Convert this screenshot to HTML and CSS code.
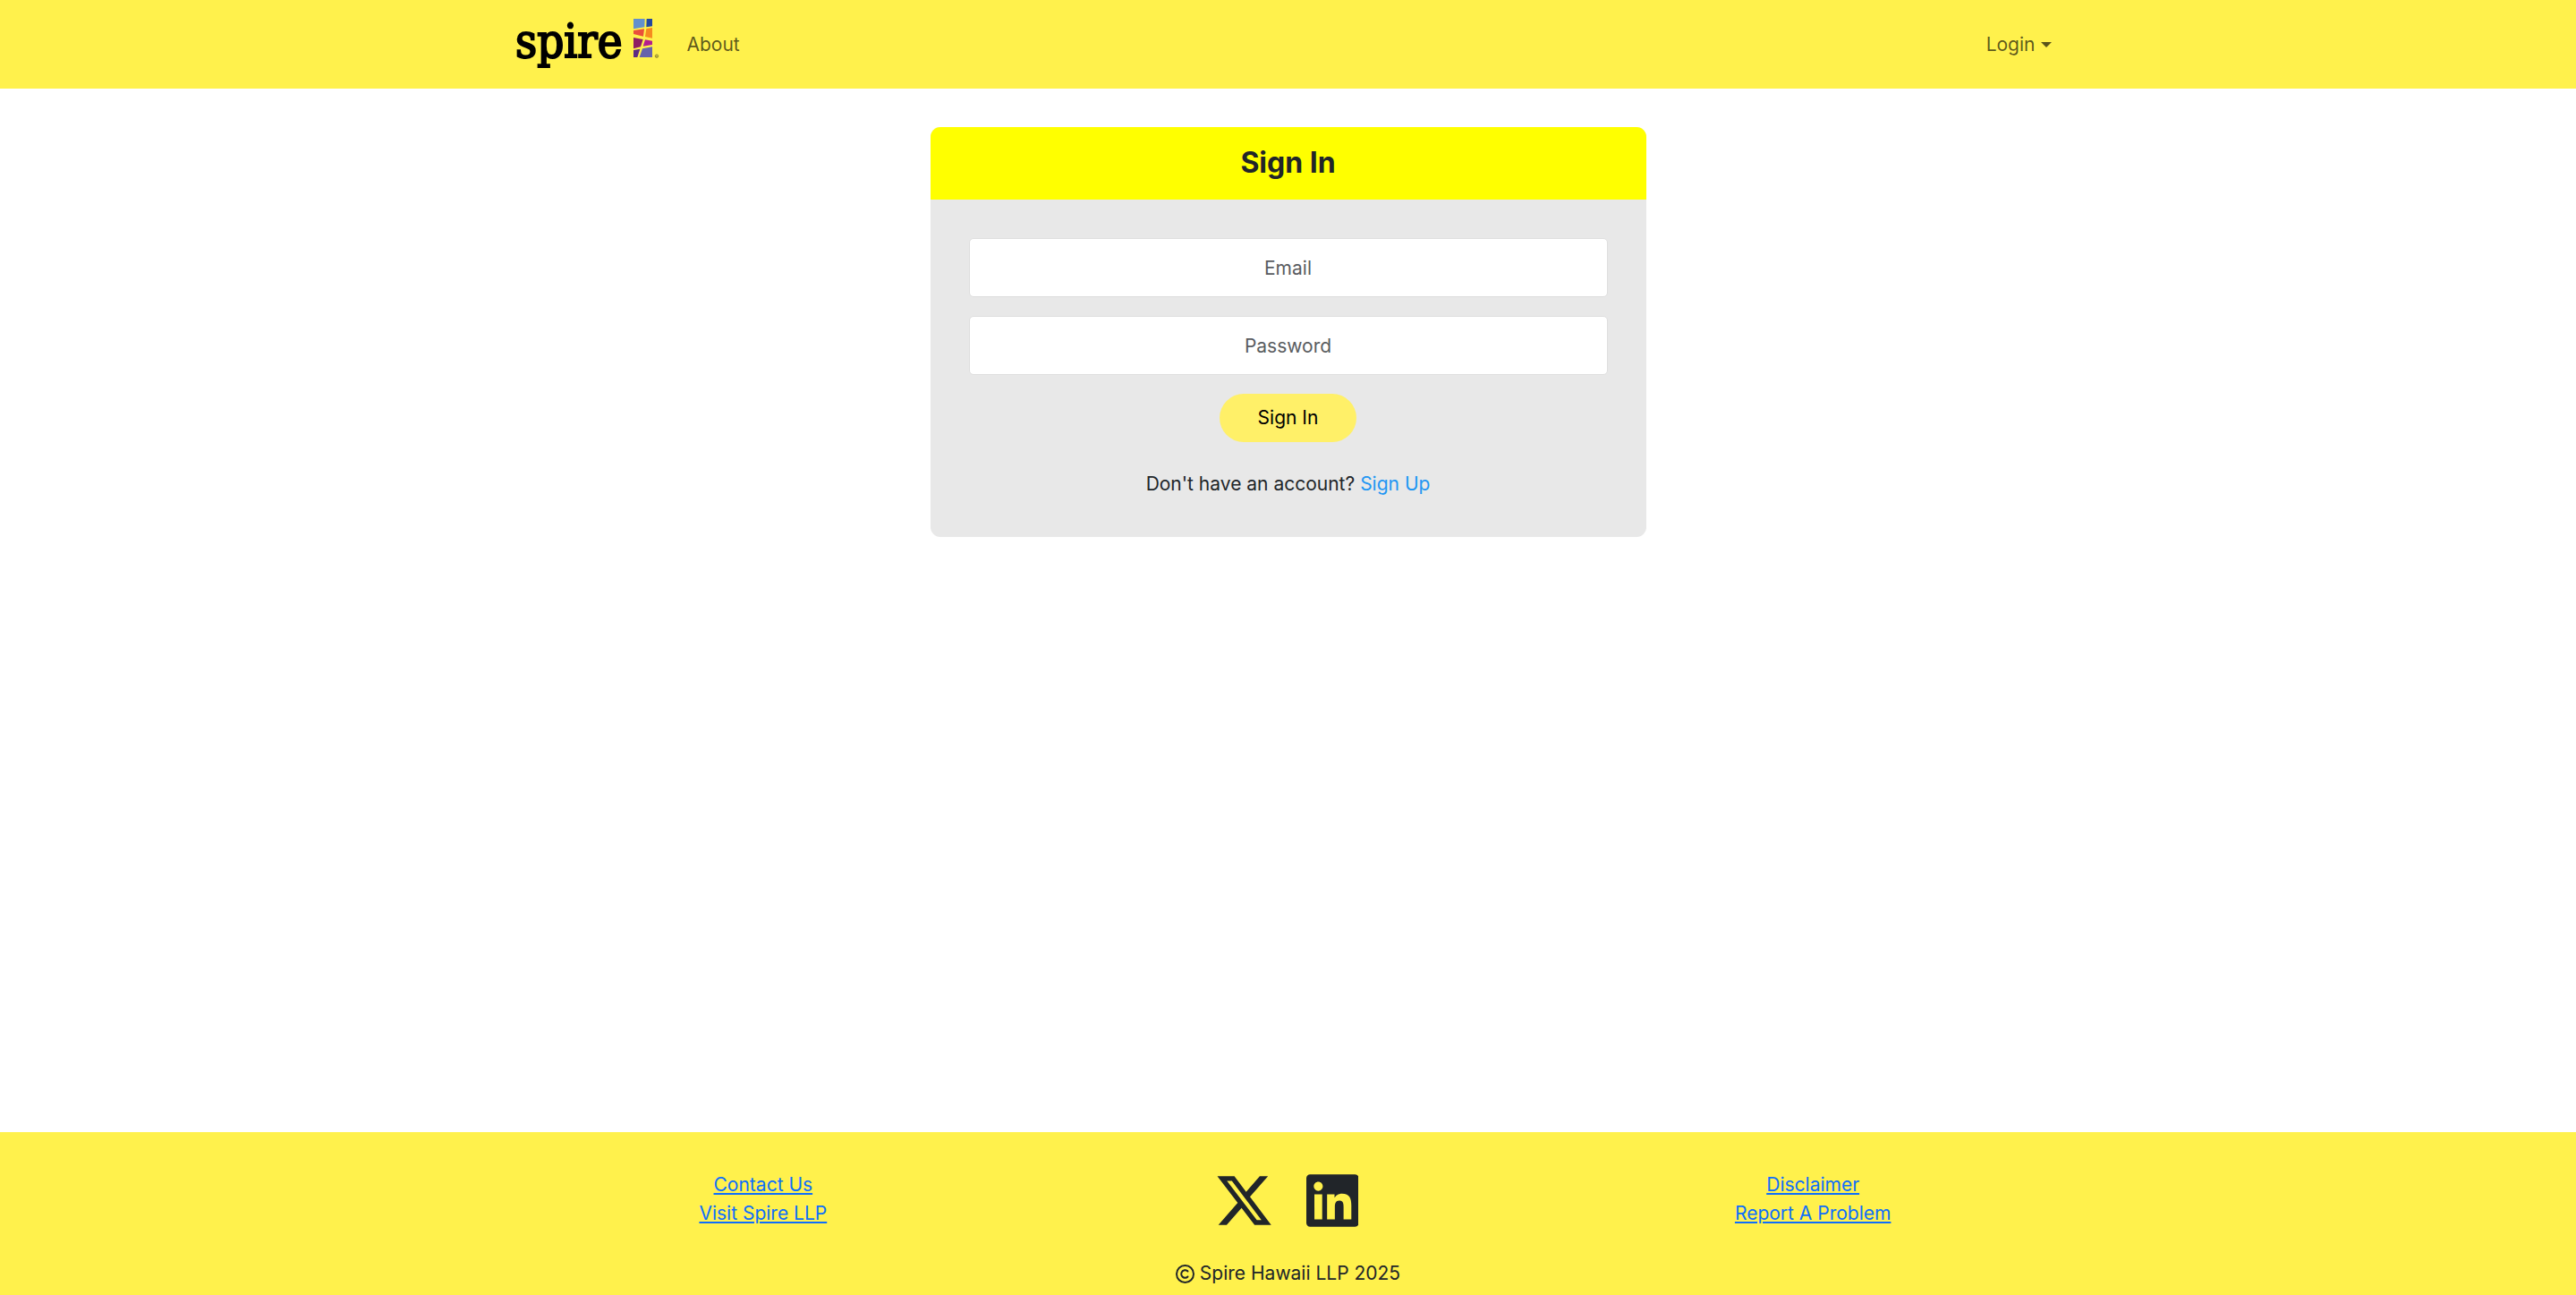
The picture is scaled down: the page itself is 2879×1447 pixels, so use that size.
FILE: index.html
```html
<!DOCTYPE html>
<html lang="en">
<head>
<meta charset="utf-8">
<meta name="viewport" content="width=device-width, initial-scale=1">
<title>Sign In - Spire</title>
<link rel="stylesheet" href="styles.css">
</head>
<body>
<header class="navbar">
  <nav class="container navbar-row">
    <a class="brand" href="#" aria-label="Spire home">
      <svg class="brand-logo" viewBox="48 48 480 201">
        <text class="brand-word" x="48" y="191">spire</text>
        <path fill="#6390cc" d="M444 63h38l-1 28-37 6z"/>
        <path fill="#24479f" d="M488 63h19v25l-20 3z"/>
        <path fill="#ea4f3b" d="M444 102l36-5-3 25-33-8z" />
        <path fill="#f68b1f" d="M487 96l20-3v35l-24-5z"/>
        <path fill="#8e1d63" d="M444 126l32 6-8 25-24 6z"/>
        <path fill="#b41e8e" d="M483 133l24 4v13l-31 5z"/>
        <path fill="#5c2a83" d="M444 168l22-4-9 28h-13z"/>
        <path fill="#6763ac" d="M474 163l33-6v35h-43z"/>
        <circle class="brand-mark" cx="522" cy="188" r="5"/>
        <text class="brand-reg" x="519" y="191">R</text>
      </svg>
    </a>
    <a class="nav-link" href="#">About</a>
    <button class="nav-link nav-toggle" type="button">Login<span class="caret"></span></button>
  </nav>
</header>

<main class="page">
  <section class="card">
    <h1 class="card-header">Sign In</h1>
    <form class="card-body">
      <input class="field" type="email" placeholder="Email" aria-label="Email">
      <input class="field" type="password" placeholder="Password" aria-label="Password">
      <button class="submit" type="submit">Sign In</button>
      <p class="signup">Don't have an account? <a class="signup-link" href="#">Sign Up</a></p>
    </form>
  </section>
</main>

<footer class="footer">
  <div class="container footer-row">
    <div class="footer-links">
      <a href="#">Contact Us</a>
      <a href="#">Visit Spire LLP</a>
    </div>
    <div class="social">
      <a href="#" aria-label="X"><svg class="social-icon" viewBox="0 0 512 512"><path d="M389.2 48h70.6L305.6 224.2 487 464H345L233.7 318.6 106.5 464H35.8L200.7 275.5 26.8 48H172.4L272.9 180.9 389.2 48zM364.4 421.8h39.1L151.1 88h-42L364.4 421.8z"/></svg></a>
      <a href="#" aria-label="LinkedIn"><svg class="social-icon" viewBox="0 0 448 512"><path d="M416 32H31.9C14.3 32 0 46.5 0 64.3v383.4C0 465.5 14.3 480 31.9 480H416c17.6 0 32-14.5 32-32.3V64.3c0-17.8-14.4-32.3-32-32.3zM135.4 416H69V202.2h66.5V416zm-33.2-243c-21.3 0-38.5-17.3-38.5-38.5S80.9 96 102.2 96c21.2 0 38.5 17.3 38.5 38.5 0 21.3-17.2 38.5-38.5 38.5zm282.1 243h-66.4V312c0-24.8-.5-56.7-34.5-56.7-34.6 0-39.9 27-39.9 54.9V416h-66.4V202.2h63.7v29.2h.9c8.9-16.8 30.6-34.5 62.9-34.5 67.2 0 79.7 44.3 79.7 101.9V416z"/></svg></a>
    </div>
    <div class="footer-links">
      <a href="#">Disclaimer</a>
      <a href="#">Report A Problem</a>
    </div>
  </div>
  <p class="copyright"><svg class="copyright-icon" viewBox="0 0 512 512" aria-hidden="true"><path d="M256 48a208 208 0 1 1 0 416 208 208 0 1 1 0-416zm0 464A256 256 0 1 0 256 0a256 256 0 1 0 0 512zM199.4 312.6c-31.2-31.2-31.2-81.9 0-113.1s81.9-31.2 113.1 0c9.4 9.4 24.6 9.4 33.9 0s9.4-24.6 0-33.9c-50-50-131-50-181 0s-50 131 0 181s131 50 181 0c9.4-9.4 9.4-24.6 0-33.9s-24.6-9.4-33.9 0c-31.2 31.2-81.9 31.2-113.1 0z"/></svg>Spire Hawaii LLP 2025</p>
</footer>
</body>
</html>
```
FILE: styles.css
```css
*, *::before, *::after {
  box-sizing: border-box;
}

body {
  display: flex;
  flex-direction: column;
  min-height: 100vh;
  margin: 0;
  background: #fff;
  color: #212529;
  font-family: Inter, "Liberation Sans", sans-serif;
  font-size: 21px;
  line-height: 32px;
}

button, input {
  font: inherit;
}

.container {
  width: 100%;
  max-width: 1760px;
  margin: 0 auto;
}

/* Top bar */
.navbar {
  padding: 16px 0;
  background: #fff14c;
}

.navbar-row {
  display: flex;
  align-items: center;
  padding: 0 16px;
}

.brand {
  margin-right: 32px;
}

.brand-logo {
  display: block;
  width: 160px;
  height: 67px;
  overflow: visible;
}

.brand-word {
  font-family: "DejaVu Serif Condensed", "DejaVu Serif", serif;
  font-size: 157px;
  fill: #000;
  stroke: #000;
  stroke-width: 6px;
}

.brand-mark {
  fill: none;
  stroke: #57521e;
  stroke-width: 2;
}

.brand-reg {
  font-size: 8px;
  fill: #57521e;
}

.nav-link {
  color: rgba(0, 0, 0, 0.65);
  text-decoration: none;
}

.nav-toggle {
  display: flex;
  align-items: center;
  gap: 6px;
  margin-left: auto;
  padding: 0 11px;
  border: 0;
  background: none;
}

.caret {
  border-top: 6px solid;
  border-right: 6px solid transparent;
  border-left: 6px solid transparent;
}

/* Sign-in card */
.page {
  flex: 1;
  padding: 43px 16px;
}

.card {
  max-width: 800px;
  margin: 0 auto;
  overflow: hidden;
  border-radius: 11px;
  background: #e8e8e8;
}

.card-header {
  margin: 0;
  padding: 20px 21px 22px;
  background: #ff0;
  font-size: 32px;
  font-weight: 700;
  line-height: 39px;
  text-align: center;
}

.card-body {
  display: flex;
  flex-direction: column;
  align-items: center;
  gap: 21px;
  padding: 43px;
}

.field {
  width: 100%;
  height: 66px;
  border: 1px solid #dedede;
  border-radius: 5px;
  background: #fff;
  color: #212529;
  text-align: center;
}

.field::placeholder {
  color: #595c5f;
  opacity: 1;
}

.submit {
  padding: 11px 43px;
  border: 0;
  border-radius: 27px;
  background: #fff068;
  color: #000;
}

.signup {
  margin: 10px 0 0;
}

.signup-link {
  color: #2196f3;
  text-decoration: none;
}

/* Footer */
.footer {
  padding: 43px 0 8px;
  background: #fff14c;
}

.footer-row {
  display: grid;
  grid-template-columns: repeat(3, 1fr);
}

.footer-links {
  display: flex;
  flex-direction: column;
  align-items: center;
}

.footer-links a {
  color: #0d6efd;
}

.social {
  display: flex;
  justify-content: center;
  gap: 36px;
  padding-right: 4px;
}

.social-icon {
  display: block;
  height: 67px;
  fill: #212529;
}

.copyright {
  display: flex;
  align-items: center;
  justify-content: center;
  gap: 6px;
  margin: 32px 0 0;
}

.copyright-icon {
  width: 21px;
  height: 21px;
  fill: #212529;
}
```
